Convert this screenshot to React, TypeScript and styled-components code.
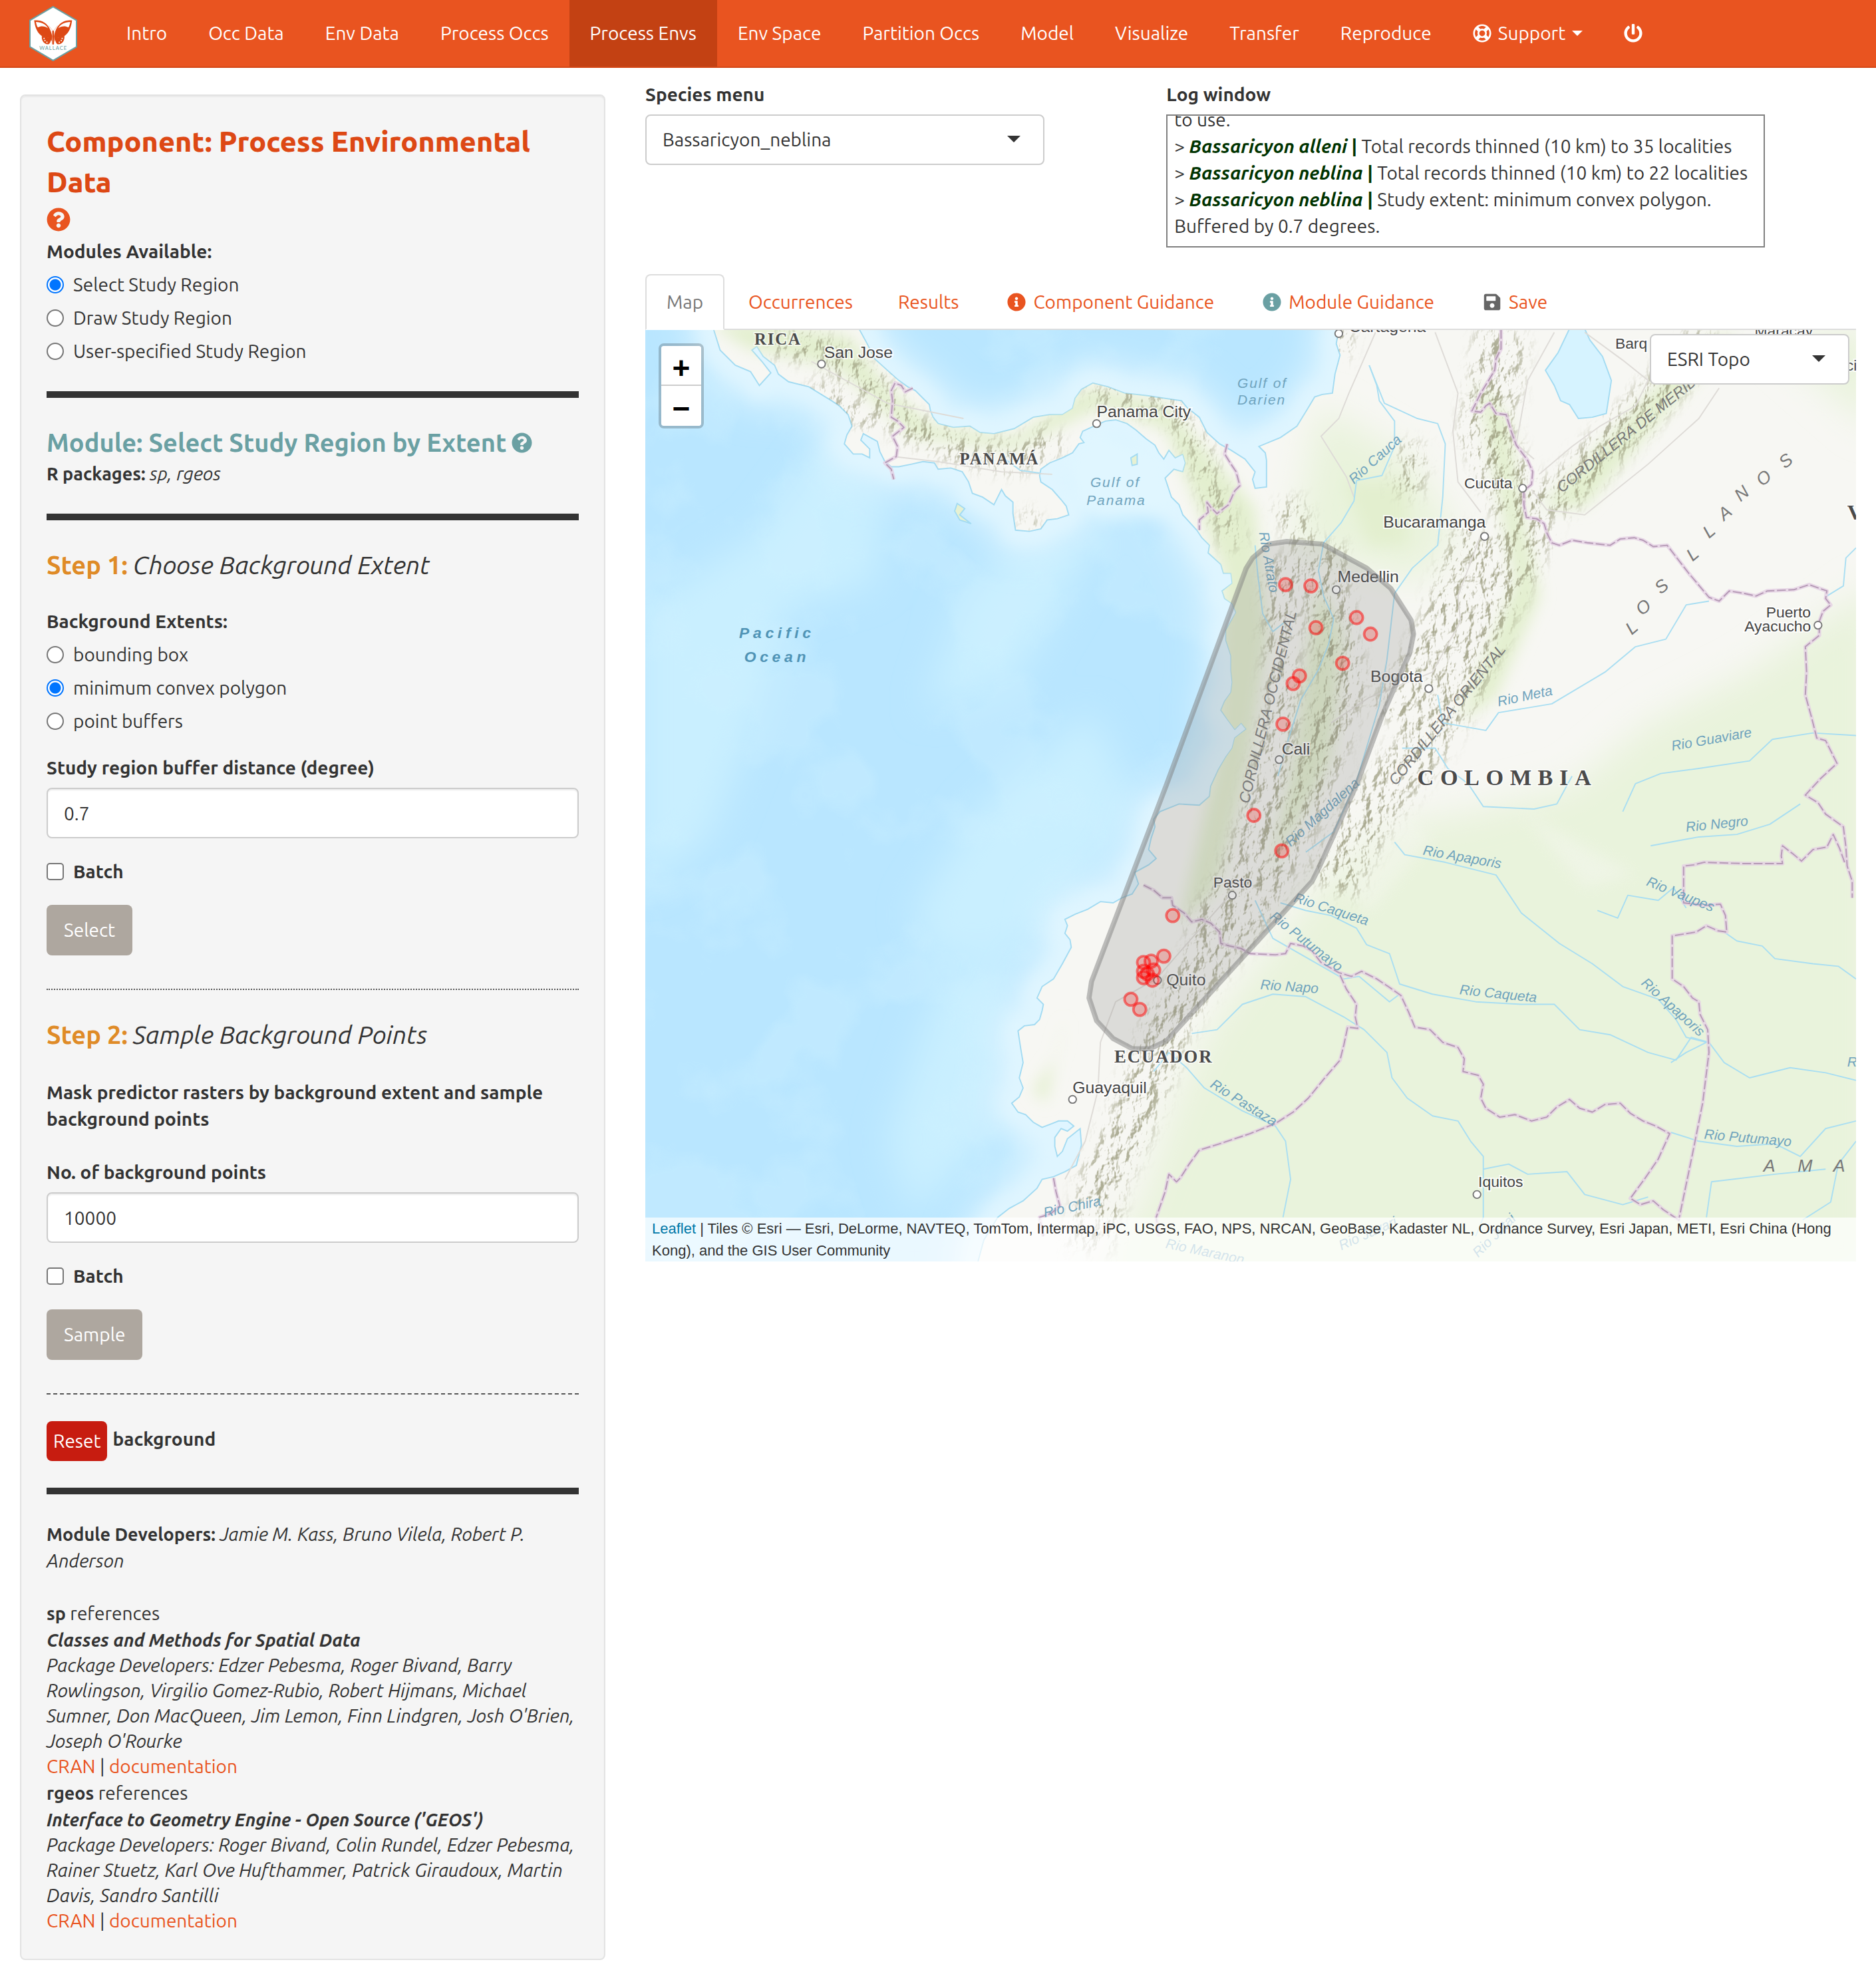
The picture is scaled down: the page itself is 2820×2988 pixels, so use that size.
import React, { useState } from "react";
import styled, { createGlobalStyle, css } from "styled-components";
import {
  FaInfoCircle,
  FaPowerOff,
  FaQuestionCircle,
  FaRegLifeRing,
  FaSave,
} from "react-icons/fa";

const color = {
  brand: "#e95420",
  brandDark: "#c34113",
  heading: "#dd4814",
  teal: "#6aa0a3",
  step: "#df8b27",
  text: "#333333",
  muted: "#aea79f",
  danger: "#c71c10",
  line: "#dddddd",
  field: "#cccccc",
};

const GlobalStyle = createGlobalStyle`
  *, *::before, *::after { box-sizing: border-box; }
  body {
    margin: 0;
    background: #ffffff;
    color: ${color.text};
    font-family: Ubuntu, Roboto, "Noto Sans", sans-serif;
    font-size: 28px;
    line-height: 40px;
  }
  button, input, select { font: inherit; color: inherit; }
  a { color: ${color.brand}; text-decoration: none; }
`;

/* ---------- Navigation ---------- */

const Navbar = styled.nav`
  display: flex;
  align-items: stretch;
  min-height: 102px;
  padding: 0 44px;
  background: ${color.brand};
  border-bottom: 2px solid #d34615;
`;

const Brand = styled.a`
  display: flex;
  align-items: center;
  margin-right: 43px;
`;

const NavList = styled.ul`
  display: flex;
  margin: 0;
  padding: 0;
  list-style: none;
`;

const NavLink = styled.a<{ $active?: boolean }>`
  display: flex;
  align-items: center;
  gap: 10px;
  height: 100%;
  padding: 30px 31px;
  color: #ffffff;
  white-space: nowrap;
  background: ${(p) => (p.$active ? color.brandDark : "transparent")};
`;

const Caret = styled.span<{ $size: number }>`
  width: 0;
  height: 0;
  border: ${(p) => p.$size}px solid transparent;
  border-top-color: currentColor;
  border-bottom: 0;
`;

/* ---------- Page frame ---------- */

const Page = styled.div`
  display: grid;
  grid-template-columns: minmax(0, 1fr) minmax(0, 2fr);
  align-items: start;
`;

const SideColumn = styled.aside`
  padding: 40px 30px;
`;

const MainColumn = styled.main`
  padding: 20px 30px;
`;

const Well = styled.div`
  padding: 38px;
  background: #f5f5f5;
  border: 2px solid #e3e3e3;
  border-radius: 8px;
  box-shadow: inset 0 2px 2px rgba(0, 0, 0, 0.05);
`;

/* ---------- Sidebar ---------- */

const ComponentTitle = styled.h1`
  margin: 0 0 8px;
  color: ${color.heading};
  font-size: 43px;
  line-height: 61px;
  font-weight: 800;
`;

const HelpButton = styled.button<{ $tone: string; $size: number }>`
  display: inline-flex;
  padding: 0;
  border: 0;
  background: none;
  color: ${(p) => p.$tone};
  font-size: ${(p) => p.$size}px;
  cursor: pointer;
`;

const SectionTitle = styled.h2<{ $tone: string }>`
  display: flex;
  align-items: center;
  gap: 8px;
  margin: 0;
  color: ${(p) => p.$tone};
  font-size: 38px;
  line-height: 54px;
  font-weight: 700;

  em { color: ${color.text}; font-weight: 400; }
`;

const ChoiceGroup = styled.fieldset<{ $top: number }>`
  display: flex;
  flex-direction: column;
  gap: 10px;
  min-width: 0;
  margin: ${(p) => p.$top}px 0 0;
  padding: 0;
  border: 0;
`;

const Legend = styled.legend`
  margin-bottom: 10px;
  padding: 0;
  font-weight: 700;
`;

const Choice = styled.label<{ $bold?: boolean }>`
  display: flex;
  align-items: center;
  gap: 14px;
  font-weight: ${(p) => (p.$bold ? 700 : 400)};
`;

const tick = css`
  appearance: none;
  flex: none;
  width: 26px;
  height: 26px;
  margin: 0;
  background: #ffffff;
  border: 2px solid #767676;
`;

const Radio = styled.input.attrs({ type: "radio" })`
  ${tick}
  border-radius: 50%;

  &:checked {
    border-color: #0075ff;
    background: radial-gradient(circle, #0075ff 8px, #ffffff 9px);
  }
`;

const Checkbox = styled.input.attrs({ type: "checkbox" })`
  ${tick}
  border-radius: 5px;

  &:checked { background: #0075ff; }
`;

const Rule = styled.hr<{ $kind?: "solid" | "dotted" | "dashed" }>`
  margin: 40px 0;
  border: 0;
  border-top: ${(p) =>
    p.$kind === "dotted" || p.$kind === "dashed"
      ? `2px ${p.$kind} #555555`
      : `10px solid ${color.text}`};
`;

const Packages = styled.p`
  margin: 0;

  b { font-size: 27px; }
`;

const Form = styled.form`
  display: flex;
  flex-direction: column;
  align-items: stretch;
  gap: 30px;
  margin-bottom: 50px;
`;

const Field = styled.div`
  display: flex;
  flex-direction: column;
  gap: 10px;
`;

const FieldLabel = styled.label`
  font-weight: 700;
`;

const TextInput = styled.input`
  width: 100%;
  height: 76px;
  padding: 0 24px;
  background: #ffffff;
  border: 2px solid ${color.field};
  border-radius: 8px;
  box-shadow: inset 0 2px 2px rgba(0, 0, 0, 0.075);
`;

const Note = styled.p`
  margin: 40px 0;
  font-weight: 700;
`;

const ActionButton = styled.button`
  align-self: flex-start;
  height: 76px;
  padding: 0 26px;
  border: 0;
  border-radius: 8px;
  background: ${color.muted};
  color: #ffffff;
`;

const ResetRow = styled.div`
  display: flex;
  align-items: center;
  gap: 8px;

  b { padding-bottom: 6px; }
`;

const ResetButton = styled.button`
  height: 60px;
  padding: 0 10px;
  border: 0;
  border-radius: 8px;
  background: ${color.danger};
  color: #ffffff;
`;

const Credits = styled.p`
  margin: 0 0 38px;

  b { font-size: 27px; }
`;

const Reference = styled.section`
  line-height: 38px;

  h3 { margin: 0; font-size: 28px; line-height: 42px; font-weight: 400; }
  p { margin: 0; }
  b { font-size: 27px; }
`;

/* ---------- Main panel ---------- */

const TopRow = styled.div`
  display: grid;
  grid-template-columns: 5fr 7fr;
  margin: 0 -30px 40px;

  > div { padding: 0 30px; }
`;

const SelectFrame = styled.div<{ $width: number }>`
  position: relative;
  width: ${(p) => p.$width}px;
  max-width: 100%;

  > span { position: absolute; top: 32px; right: 36px; pointer-events: none; }
`;

const Select = styled.select`
  appearance: none;
  width: 100%;
  height: 76px;
  padding: 0 24px;
  background: #ffffff;
  border: 2px solid ${color.field};
  border-radius: 8px;
`;

const LogTitle = styled.h2`
  margin: 0 0 10px;
  font-size: 28px;
  line-height: 40px;
  font-weight: 700;
`;

const LogWindow = styled.div`
  display: flex;
  flex-direction: column;
  justify-content: flex-end;
  width: 900px;
  max-width: 100%;
  height: 200px;
  padding: 10px;
  overflow: hidden;
  border: 2px solid #808080;

  p { flex: none; margin: 0; }
  b { color: #003300; }
`;

const Tabs = styled.ul`
  display: flex;
  gap: 4px;
  margin: 0;
  padding: 0;
  list-style: none;
  border-bottom: 2px solid ${color.line};
`;

const Tab = styled.a<{ $active?: boolean; $icon?: string }>`
  display: flex;
  align-items: center;
  gap: 11px;
  margin-bottom: -2px;
  padding: 20px 30px;
  border: 2px solid transparent;
  border-radius: 8px 8px 0 0;
  white-space: nowrap;

  svg { margin-left: 5px; color: ${(p) => p.$icon ?? color.brand}; }

  ${(p) =>
    p.$active &&
    css`
      color: #777777;
      background: #ffffff;
      border-color: ${color.line} ${color.line} #ffffff;
    `}
`;

/* ---------- Map ---------- */

const MapPane = styled.section`
  position: relative;
  height: 1400px;
  overflow: hidden;
  background: #c2eaff;
`;

const MapCanvas = styled.svg`
  display: block;
  width: 100%;
  height: 100%;
`;

const ZoomControl = styled.div`
  position: absolute;
  top: 20px;
  left: 20px;
  display: flex;
  flex-direction: column;
  border: 4px solid rgba(0, 0, 0, 0.2);
  border-radius: 8px;
  background-clip: padding-box;
`;

const ZoomButton = styled.button`
  width: 60px;
  height: 60px;
  padding: 8px 0 0;
  border: 0;
  background: #ffffff;
  color: #000000;
  font: bold 46px/50px "Liberation Sans", sans-serif;

  &:first-child { border-bottom: 2px solid ${color.field}; border-radius: 4px 4px 0 0; }
  &:last-child { border-radius: 0 0 4px 4px; }
`;

const Basemap = styled.div`
  position: absolute;
  top: 6px;
  right: 10px;
`;

const Attribution = styled.footer`
  position: absolute;
  right: 0;
  bottom: 0;
  left: 0;
  padding: 0 10px;
  background: rgba(255, 255, 255, 0.7);
  font: 22px/33px "Liberation Sans", Arial, sans-serif;

  a { color: #0078a8; }
`;

const Place = styled.text<{ $size?: number }>`
  font-family: "Liberation Sans", sans-serif;
  font-size: ${(p) => p.$size ?? 13}px;
  fill: #444444;
  stroke: rgba(255, 255, 255, 0.8);
  stroke-width: 2px;
  paint-order: stroke;
`;

const Country = styled.text<{ $size: number; $gap: number }>`
  font-family: "Liberation Serif", serif;
  font-weight: 700;
  font-size: ${(p) => p.$size}px;
  letter-spacing: ${(p) => p.$gap}px;
  fill: #4a4a4a;
  stroke: rgba(255, 255, 255, 0.6);
  stroke-width: 2px;
  paint-order: stroke;
`;

const Water = styled.text<{ $size?: number; $gap?: number; $bold?: boolean }>`
  font-family: "Liberation Sans", sans-serif;
  font-style: italic;
  font-weight: ${(p) => (p.$bold ? 700 : 400)};
  font-size: ${(p) => p.$size ?? 11}px;
  letter-spacing: ${(p) => p.$gap ?? 0}px;
  fill: ${(p) => (p.$bold ? "#4f93b5" : "#6fa3bd")};
`;

const Region = styled.text<{ $size?: number }>`
  font-family: "Liberation Sans", sans-serif;
  font-style: italic;
  font-size: ${(p) => p.$size ?? 12}px;
  fill: #787878;
`;

const PACIFIC =
  "M560 250L563 260 568 276 580 288 592 293 599 304 608 294 601 285 593 276 597 273 602 281 611 288 614 295 622 301 638 305 656 316 662 320 669 327 672 336 668 343 666 350 673 358 680 358 686 361 686 354 679 347 681 342 692 348 694 356 698 364 703 368 709 368 719 366 728 364 737 365 740 370 750 369 759 372 764 380 767 389 775 392 784 398 787 392 790 386 793 391 799 396 799 405 801 418 812 419 821 417 826 410 834 409 843 406 841 399 837 394 830 386 821 380 820 375 821 370 828 365 838 361 846 357 851 350 855 349 852 345 854 340 865 335 872 332 880 331 889 334 896 339 904 346 911 351 914 357 918 362 922 355 927 361 933 358 935 365 933 372 926 370 919 377 924 392 930 398 933 406 944 418 948 424 954 430 953 436 963 445 965 452 971 452 972 460 964 466 966 472 972 476 975 483 971 490 967 497 967 505 971 517 971 529 972 538 971 546 966 553 963 560 968 567 974 575 979 570 983 575 974 582 972 590 967 597 961 607 955 620 954 628 946 635 930 634 915 640 910 646 911 652 908 661 906 670 912 677 906 682 895 688 898 697 893 705 885 708 878 712 868 711 858 717 848 721 840 725 842 730 840 736 844 741 845 747 838 760 831 772 822 778 818 787 823 792 822 797 820 804 816 808 808 809 803 813 805 826 807 838 804 850 807 858 804 865 798 870 803 877 809 879 815 885 822 889 830 886 835 884 842 884 847 888 842 892 837 890 832 897 832 904 834 912 838 908 842 898 852 890 853 903 849 919 840 924 831 928 822 930 818 937 807 947 796 953 787 960 776 978 770 1000";
const CARIBBEAN =
  "L1480 1000 1480 250 1056 250 1056 260 1054 271 1057 280 1053 295 1051 310 1043 311 1037 313 1031 323 1023 336 1010 345 993 352 998 357 999 363 999 375 999 384 990 385 988 378 990 372 982 362 971 355 962 350 952 341 946 329 936 321 932 316 918 314 905 312 887 310 874 305 862 302 853 307 848 314 846 322 838 327 828 327 815 329 800 338 784 342 773 341 765 336 752 337 740 334 736 329 734 324 733 319 728 314 722 308 716 305 709 300 700 292 690 283 684 271 678 260 676 250Z";
const LAND = PACIFIC + CARIBBEAN;

const RIDGES = [
  { d: "M610 270L645 275 690 305 712 335 760 355 800 362 835 345", w: 22 },
  { d: "M640 305L690 335", w: 14 },
  { d: "M808 414L818 408 M860 310L920 320 945 350 960 400 975 430", w: 16 },
  { d: "M1012 440L1010 500 1012 560 1000 610 990 650 970 700 945 740", w: 26 },
  { d: "M1042 430L1050 490 1060 540 1040 600 1015 660 990 710 950 760 925 800 905 850 890 890 870 930 860 985", w: 36 },
  { d: "M1185 262L1180 300 1172 340 1190 380 1205 420 1175 480 1150 540 1120 590 1080 640 1050 700", w: 40 },
  { d: "M1170 420L1140 500 1100 570", w: 44 },
  { d: "M1220 400L1250 370 1290 330 1330 285 1350 265", w: 30 },
  { d: "M1115 350L1110 390 M1015 395L1030 430 M1040 262L1065 275", w: 22 },
];

const BORDERS = [
  "M720 306L714 309 711 304 706 302 703 308 704 316 703 329 708 332 713 337 704 344 708 352 707 360 698 365 703 370 705 378",
  "M968 350L966 358 971 366 975 372 978 383 974 387 969 398 960 405 955 400 952 396 953 404 946 410 946 418",
  "M1184 260L1184 275 1180 283 1179 292 1168 310 1161 324 1168 325 1172 320 1175 318 1180 326 1188 327 1192 340 1196 351 1205 363 1209 372 1208 382 1202 387 1202 398 1204 408 1212 409 1218 413 1220 420 1224 428 1230 430 1240 426 1252 428 1270 430 1278 425 1289 424 1296 426 1304 431 1315 430 1332 452 1348 471 1356 474 1364 466 1376 468 1385 470 1394 466 1415 465 1427 461 1441 466 1440 472 1444 477 1438 482 1435 490 1435 501 1424 510 1425 530 1424 548 1429 566 1433 582 1440 584 1449 602 1436 614 1424 627 1434 633 1440 642 1454 652 1456 668 1457 683 1461 695 1461 708",
  "M1455 680L1451 669 1446 658 1441 668 1430 670 1421 679 1415 674 1406 667 1405 675 1406 681 1375 681 1344 680 1336 682 1328 683 1328 712 1345 714 1357 713 1361 722 1362 735 1355 734 1346 730 1338 735 1319 738 1319 772 1328 778 1335 787 1340 790 1341 800 1347 812 1348 830 1343 870 1335 910 1324 963",
  "M902 698L910 702 917 708 924 708 925 714 934 720 940 727 948 725 955 728 962 735 963 744 970 746 979 748 986 752 1006 753 1014 752 1018 744 1028 746 1035 750 1042 759 1056 767 1066 770 1074 766 1086 772 1095 778 1105 785 1111 798 1116 810 1128 812 1138 822 1150 826 1155 835 1154 845 1166 848 1170 855 1168 866 1172 874 1183 881 1195 879 1208 884 1220 881 1228 873 1238 867 1246 874 1256 877 1266 871 1278 870 1286 878 1296 884 1306 888 1317 894 1308 914 1297 930 1286 945 1294 950 1304 947 1312 954 1324 962",
  "M1057 769L1062 780 1070 792 1069 802 1071 811 1063 810 1060 824 1057 836 1045 850 1032 866 1020 877 1006 886 986 894 962 902 946 907 938 918 931 929 928 932 922 926 919 940 912 960 914 975",
  "M831 929L833 940 836 951 829 957 820 960 823 975",
];

const RIVERS = [
  "M1080 288L1086 304 1088 316 1100 332 1100 352 1090 375 1070 379 1068 395 1058 412 1044 428 1040 450 1044 470 1052 488 1048 508 1040 528 1026 552 1014 590 1008 612",
  "M1080 288L1092 318 1118 330 1134 334 1140 350 1138 392 1134 430 1114 448 1100 468 1094 520 1088 556 1070 616 1052 656 1030 672",
  "M990 430L992 452 996 484 1004 498 1014 490",
  "M1134 548L1138 570 1172 576 1182 562 1224 555 1266 530 1290 510 1314 504 1330 477 1348 474",
  "M1106 590L1132 590 1142 606 1158 618 1170 636 1210 638 1228 634 1240 612",
  "M1280 640L1290 618 1310 610 1340 606 1380 600 1398 583 1430 578 1464 580",
  "M1302 667L1340 660 1370 658 1396 650 1420 634",
  "M1100 664L1108 674 1140 680 1180 690 1200 720 1230 744 1256 760 1280 778 1308 788 1322 804 1330 818 1346 822 1330 830 1318 838",
  "M1260 718L1276 724 1284 706 1308 710 1320 700 1330 716",
  "M1010 712L1030 718 1050 722 1070 732 1078 745 1096 752 1104 776 1130 784 1164 790 1200 792 1226 792 1246 812 1270 816 1300 830 1322 836 1334 818 1348 822 1360 838 1380 850 1412 842 1440 846 1464 852",
  "M990 710L1004 740 1018 748 1060 772 1072 770 1096 790 1104 784",
  "M1360 735L1370 742 1390 746 1400 756 1430 760 1450 762 1464 772",
  "M940 815L960 812 980 792 1004 784 1030 786 1060 802 1076 812 1094 830 1098 850 1110 866 1130 880 1150 884 1160 900 1170 912 1170 960 1164 975",
  "M910 845L922 830 936 842 950 858 980 876 1006 888 1014 900 1018 930 1012 960",
  "M1170 922L1190 918 1205 926 1236 924 1250 942 1280 950 1300 944",
  "M1318 893L1340 900 1370 904 1400 902 1420 912 1440 890 1464 884",
  "M1464 900L1450 918 1444 948 1422 962 M1346 960L1350 932 1400 926 1440 922",
  "M1464 432L1456 440 1454 462 1441 470",
  "M790 360L805 371 820 373",
];

const ROADS = [
  "M640 285L700 318 760 330 M705 360L740 364 790 372 830 374",
  "M1085 262L1064 310 1056 330 1042 344 1062 376 1068 392",
  "M1132 262L1150 310 1146 340 1150 380 1168 404",
  "M1226 262L1205 300 1196 350 1210 362 M1208 386L1220 402 1250 406 1300 366 1340 330 1356 306",
  "M1250 262L1280 284 1300 300 1290 320 1262 336 1240 352 1214 374",
  "M1168 422L1150 470 1152 490 1130 530 1080 550 1050 570",
  "M970 706L940 740 912 772 880 790 868 822 866 860 856 900 840 930",
];

const OCCURRENCES: [number, number][] = [
  [1014, 461], [1034, 462], [1070, 487], [1038, 495], [1081, 500], [1059, 523],
  [1025, 533], [1020, 539], [1012, 571], [989, 643], [1011, 671], [925, 722],
  [918, 754], [908, 758], [902, 759], [902, 766], [910, 765], [905, 768],
  [902, 771], [909, 773], [892, 788], [899, 796],
];

const CITIES: [number, number, string, number, number, number][] = [
  [648, 287, "San Jose", 650, 282, 13],
  [865, 334, "Panama City", 865, 329, 13],
  [1056, 263, "Cartagena", 1064, 262, 13],
  [1201, 385, "Cucuta", 1155, 385, 12],
  [1171, 423, "Bucaramanga", 1091, 416, 13],
  [1054, 465, "Medellin", 1055, 459, 13],
  [1127, 543, "Bogota", 1081, 538, 13],
  [1009, 599, "Cali", 1011, 595, 13],
  [972, 706, "Pasto", 957, 700, 12],
  [913, 773, "Quito", 920, 777, 13],
  [846, 867, "Guayaquil", 846, 862, 13],
  [1165, 942, "Iquitos", 1166, 936, 12],
  [1434, 493, "Ayacucho", 1376, 498, 12],
];

const LLANOS: [string, number, number][] = [
  ["L", 1287, 501], ["O", 1295, 486], ["S", 1310, 469], ["L", 1335, 443], ["L", 1348, 425],
  ["A", 1360, 411], ["N", 1373, 396], ["O", 1390, 384], ["S", 1408, 370],
];

function StudyMap() {
  return (
    <MapCanvas
      viewBox="509 260 955 735"
      preserveAspectRatio="xMidYMid slice"
      role="img"
      aria-label="Study region map"
    >
      <defs>
        <clipPath id="land"><path d={LAND} /></clipPath>
        <filter id="soft6" x="-30%" y="-30%" width="160%" height="160%"><feGaussianBlur stdDeviation="6" /></filter>
        <filter id="soft14" x="-30%" y="-30%" width="160%" height="160%"><feGaussianBlur stdDeviation="14" /></filter>
        <filter id="relief" x="0" y="0" width="1" height="1" colorInterpolationFilters="sRGB">
          <feTurbulence type="fractalNoise" baseFrequency="0.1 0.07" numOctaves={4} seed={7} result="n" />
          <feDiffuseLighting in="n" surfaceScale={5} diffuseConstant={1} lightingColor="#ffffff" result="lit">
            <feDistantLight azimuth={215} elevation={50} />
          </feDiffuseLighting>
          <feColorMatrix in="lit" type="matrix" values="0 0 0 0 0.58  0 0 0 0 0.58  0 0 0 0 0.46  -2 0 0 0 1.35" />
        </filter>
        <filter id="patches" x="0" y="0" width="1" height="1" colorInterpolationFilters="sRGB">
          <feTurbulence type="fractalNoise" baseFrequency="0.012" numOctaves={4} seed={12} />
          <feColorMatrix type="matrix" values="0 0 0 0 0.81  0 0 0 0 0.945  0 0 0 0 1  6 0 0 0 -3" />
        </filter>
        <mask id="ridges">
          <g filter="url(#soft6)" fill="none" stroke="#ffffff" strokeLinejoin="round">
            {RIDGES.map((r) => <path key={r.d} d={r.d} strokeWidth={r.w} />)}
          </g>
        </mask>
      </defs>

      <rect x="509" y="260" width="955" height="735" fill="#b9e6ff" />
      <g filter="url(#soft14)" fill="#c9efff">
        <path d="M505 480L600 420 660 340 700 390 690 460 620 480 600 560 560 660 505 700Z" />
        <path d="M730 560L800 540 870 420 800 430 760 470Z M770 640L860 560 900 640 820 740 740 760 720 720Z" />
        <path d="M740 780L800 740 780 900 720 960 700 900Z" />
      </g>
      <rect x="509" y="260" width="955" height="735" filter="url(#patches)" opacity="0.35" />
      <g fill="none" stroke="#dff5ff" strokeLinejoin="round">
        <path d={LAND} strokeWidth="36" filter="url(#soft14)" />
        <path d={LAND} strokeWidth="20" filter="url(#soft6)" />
      </g>
      <path d="M862 337L840 365 845 400 870 410 930 405 915 355Z" fill="#e0f6ff" filter="url(#soft6)" />

      <path d={LAND} fill="#f7f7f3" stroke="#a3dbf2" strokeWidth="1" />
      <g clipPath="url(#land)">
        <g filter="url(#soft14)" fill="#e9f3dc">
          <path d="M960 800L1040 700 1100 650 1160 640 1240 620 1300 570 1380 530 1480 460 1480 1010 860 1010 900 950 930 860Z" />
          <path d="M1040 320L1110 360 1150 420 1120 460 1020 430Z" />
          <path d="M1400 270L1480 260 1480 340Z" />
        </g>
        <g filter="url(#soft6)" fill="#e3efcf">
          <path d="M560 255L600 255 670 265 700 305 735 335 800 345 860 305 920 318 990 400 1000 500 985 600 960 700 930 730 960 600 965 450 920 340 870 320 800 355 720 345 660 290 590 275Z" />
          <path d="M1165 300L1190 330 1200 400 1215 470 1180 550 1150 570 1195 460 1180 380Z" />
          <path d="M1060 380L1110 380 1110 430 1080 430Z M1215 400L1340 270 1370 262 1250 400Z" />
          <path d="M815 860L835 830 840 800 825 870Z M1040 460L1060 500 1050 600 1000 690 1020 600 1030 520Z" />
        </g>
        <path d="M1200 640L1290 690 1250 700Z M1060 700L1100 640 1130 660 1080 720Z" fill="#f8f8f4" opacity="0.4" filter="url(#soft6)" />
        <g mask="url(#ridges)" opacity="0.75">
          <rect x="509" y="260" width="955" height="735" filter="url(#relief)" />
        </g>
      </g>

      <g stroke="#a3dbf2">
        <path d="M1240 255L1229 278 1219 292 1226 304 1231 316 1238 319 1245 330 1256 329 1267 326 1271 300 1264 281 1254 268 1248 255Z" fill="#d6f3ff" />
        <path d="M755 397L761 401 757 406 766 413 757 410 753 403Z M892 361L897 358 897 366 893 367Z" fill="#e6f1d3" />
      </g>
      <g fill="none" stroke="#dedbd7" strokeWidth="1">
        {ROADS.map((d) => <path key={d} d={d} />)}
      </g>
      <g fill="none" stroke="#a9def2" strokeWidth="1" strokeLinejoin="round">
        {RIVERS.map((d) => <path key={d} d={d} />)}
      </g>
      <g fill="none" strokeLinejoin="round">
        {BORDERS.map((d) => (
          <g key={d}>
            <path d={d} stroke="#e3cfe3" strokeWidth="3" opacity="0.8" />
            <path d={d} stroke="#b59ab5" strokeWidth="1" strokeDasharray="7 2" />
          </g>
        ))}
      </g>

      <Country $size={13} $gap={1} x="595" y="272">RICA</Country>
      <Country $size={13} $gap={1} x="757" y="366">PANAMÁ</Country>
      <Country $size={18} $gap={5} x="1118" y="619">COLOMBIA</Country>
      <Country $size={14} $gap={1} x="879" y="838">ECUADOR</Country>
      <Country $size={17} $gap={1} x="1457" y="410">V</Country>

      <Water $bold $size={12} $gap={3} x="583" y="503">Pacific</Water>
      <Water $bold $size={12} $gap={3} x="587" y="522">Ocean</Water>
      <Water $size={11} $gap={1} x="860" y="384">Gulf of</Water>
      <Water $size={11} $gap={1} x="857" y="398">Panama</Water>
      <Water $size={11} $gap={1} x="976" y="306">Gulf of</Water>
      <Water $size={11} $gap={1} x="976" y="319">Darien</Water>
      <Water transform="translate(1068 382) rotate(-42)">Rio Cauca</Water>
      <Water transform="translate(993 420) rotate(80)">Rio Atrato</Water>
      <Water transform="translate(1182 557) rotate(-12)">Rio Meta</Water>
      <Water transform="translate(1319 592) rotate(-10)">Rio Guaviare</Water>
      <Water transform="translate(1330 656) rotate(-6)">Rio Negro</Water>
      <Water transform="translate(1122 674) rotate(10)">Rio Apaporis</Water>
      <Water transform="translate(1298 698) rotate(22)">Rio Vaupes</Water>
      <Water transform="translate(1020 711) rotate(18)">Rio Caqueta</Water>
      <Water transform="translate(1001 724) rotate(38)">Rio Putumayo</Water>
      <Water transform="translate(1018 668) rotate(-42)">Rio Magdalena</Water>
      <Water transform="translate(994 780) rotate(4)">Rio Napo</Water>
      <Water transform="translate(1151 784) rotate(6)">Rio Caqueta</Water>
      <Water transform="translate(1294 776) rotate(42)">Rio Apaporis</Water>
      <Water transform="translate(954 857) rotate(32)">Rio Pastaza</Water>
      <Water transform="translate(1344 898) rotate(5)">Rio Putumayo</Water>
      <Water transform="translate(824 960) rotate(-12)">Rio Chira</Water>
      <Water transform="translate(919 984) rotate(12)">Rio Maranon</Water>
      <Water transform="translate(1058 986) rotate(-24)">Rio Javari</Water>
      <Water transform="translate(1166 992) rotate(-45)">Rio Jutai</Water>
      <Water x="1457" y="841">R</Water>

      <Region transform="translate(985 634) rotate(-76)">CORDILLERA OCCIDENTAL</Region>
      <Region transform="translate(1101 620) rotate(-51)">CORDILLERA ORIENTAL</Region>
      <Region transform="translate(1232 389) rotate(-39)">CORDILLERA DE MERIDA</Region>
      {LLANOS.map(([letter, x, y]) => (
        <Region key={x} $size={14} transform={`translate(${x} ${y}) rotate(-40)`}>{letter}</Region>
      ))}
      <Region $size={14} x="1391" y="924">A</Region>
      <Region $size={14} x="1418" y="924">M</Region>
      <Region $size={14} x="1446" y="924">A</Region>

      {CITIES.map(([cx, cy, name, x, y, size]) => (
        <g key={name}>
          <circle cx={cx} cy={cy} r="3" fill="#ffffff" stroke="#777777" strokeWidth="1" />
          <Place $size={size} x={x} y={y}>{name}</Place>
        </g>
      ))}
      <Place $size={12} x="1393" y="487">Puerto</Place>
      <Place $size={12} x="1274" y="275">Barq</Place>
      <Place $size={12} x="1384" y="265">Maracay</Place>
      <Place $size={12} x="1456" y="292">ci</Place>

      <path
        d="M988 440L1001 429 1015 427 1043 429 1078 448 1097 464 1113 489 1115 500 1112 515 1090 565 1070 619 1041 683 1035 695 982 753 920 821 907 827 893 827 878 819 865 805 859 787 861 774 920 619 983 448Z"
        fill="#808080"
        fillOpacity="0.22"
        stroke="#808080"
        strokeOpacity="0.5"
        strokeWidth="4"
        strokeLinejoin="round"
      />
      <g fill="#ff0000" fillOpacity="0.2" stroke="#ff0000" strokeOpacity="0.5" strokeWidth="2">
        {OCCURRENCES.map(([x, y], i) => <circle key={i} cx={x} cy={y} r="5" />)}
      </g>
    </MapCanvas>
  );
}

function Wing() {
  return (
    <>
      <path
        fillRule="evenodd"
        d="M46 80C84 78 116 92 128 152L127 160C108 160 92 156 78 149 60 136 50 112 46 80ZM54 87C56 98 59 106 63 112 78 103 96 106 109 116 98 96 80 88 54 87Z"
      />
      <path d="M81 149C96 156 112 159 127 159 127 172 122 184 112 188 101 190 91 184 85 174 81 166 80 158 81 149Z" />
      <g fill="#ffffff">
        <circle cx="91" cy="162" r="3" />
        <circle cx="95" cy="172" r="3" />
        <circle cx="104" cy="179" r="3" />
        <path d="M112 190C118 184 121 176 122 168L126 190Z" />
      </g>
    </>
  );
}

function Logo() {
  return (
    <svg width="72" height="83" viewBox="24 15 217 250" role="img" aria-label="Wallace">
      <path d="M132 18L238 80V200L132 262 27 200V80Z" fill="#ffffff" stroke="#6aa0a3" strokeWidth="6" />
      <g fill="#dd4814">
        <Wing />
        <g transform="translate(264 0) scale(-1 1)"><Wing /></g>
        <rect x="128" y="126" width="8" height="64" rx="4" />
        <path d="M131 128L112 104M133 128L152 104" fill="none" stroke="#e9a58c" strokeWidth="2" />
      </g>
      <text x="133" y="213" textAnchor="middle" fontFamily="Lato, sans-serif" fontSize="23" letterSpacing="3" fill="#6aa0a3">
        WALLACE
      </text>
    </svg>
  );
}

const NAV = [
  "Intro", "Occ Data", "Env Data", "Process Occs", "Process Envs", "Env Space",
  "Partition Occs", "Model", "Visualize", "Transfer", "Reproduce",
];

const MODULES = ["Select Study Region", "Draw Study Region", "User-specified Study Region"];
const EXTENTS = ["bounding box", "minimum convex polygon", "point buffers"];

function Radios(props: { name: string; legend: string; options: string[]; initial: string; top: number }) {
  const [value, setValue] = useState(props.initial);
  return (
    <ChoiceGroup $top={props.top}>
      <Legend>{props.legend}</Legend>
      {props.options.map((option) => (
        <Choice key={option}>
          <Radio name={props.name} checked={value === option} onChange={() => setValue(option)} />
          {option}
        </Choice>
      ))}
    </ChoiceGroup>
  );
}

function PackageReference(props: { name: string; title: string; developers: string }) {
  return (
    <Reference>
      <h3><b>{props.name}</b> references</h3>
      <p><b><i>{props.title}</i></b></p>
      <p><i>Package Developers: {props.developers}</i></p>
      <p><a href="#cran">CRAN</a> | <a href="#documentation">documentation</a></p>
    </Reference>
  );
}

export default function App() {
  return (
    <>
      <GlobalStyle />
      <Navbar>
        <Brand href="#home"><Logo /></Brand>
        <NavList>
          {NAV.map((item) => (
            <li key={item}>
              <NavLink href="#nav" $active={item === "Process Envs"}>{item}</NavLink>
            </li>
          ))}
          <li>
            <NavLink href="#support">
              <FaRegLifeRing size={28} />Support<Caret $size={8} />
            </NavLink>
          </li>
          <li>
            <NavLink href="#quit" aria-label="Quit"><FaPowerOff size={28} /></NavLink>
          </li>
        </NavList>
      </Navbar>

      <Page>
        <SideColumn>
          <Well>
            <ComponentTitle>Component: Process Environmental Data</ComponentTitle>
            <HelpButton type="button" $tone={color.brand} $size={36} aria-label="Component help">
              <FaQuestionCircle />
            </HelpButton>
            <Radios name="module" legend="Modules Available:" options={MODULES} initial={MODULES[0]} top={0} />
            <Rule />
            <SectionTitle $tone={color.teal}>
              Module: Select Study Region by Extent
              <HelpButton type="button" $tone={color.teal} $size={31} aria-label="Module help">
                <FaQuestionCircle />
              </HelpButton>
            </SectionTitle>
            <Packages><b>R packages:</b> <i>sp, rgeos</i></Packages>
            <Rule />

            <SectionTitle $tone={color.step}>Step 1: <em>Choose Background Extent</em></SectionTitle>
            <Form>
              <Radios name="extent" legend="Background Extents:" options={EXTENTS} initial={EXTENTS[1]} top={38} />
              <Field>
                <FieldLabel htmlFor="buffer">Study region buffer distance (degree)</FieldLabel>
                <TextInput id="buffer" defaultValue="0.7" />
              </Field>
              <Choice $bold><Checkbox />Batch</Choice>
              <ActionButton type="button">Select</ActionButton>
            </Form>
            <Rule $kind="dotted" />

            <SectionTitle $tone={color.step}>Step 2: <em>Sample Background Points</em></SectionTitle>
            <Note>Mask predictor rasters by background extent and sample background points</Note>
            <Form>
              <Field>
                <FieldLabel htmlFor="points">No. of background points</FieldLabel>
                <TextInput id="points" defaultValue="10000" />
              </Field>
              <Choice $bold><Checkbox />Batch</Choice>
              <ActionButton type="button">Sample</ActionButton>
            </Form>
            <Rule $kind="dashed" />

            <ResetRow><ResetButton type="button">Reset</ResetButton><b>background</b></ResetRow>
            <Rule />

            <Credits>
              <b>Module Developers:</b> <i>Jamie M. Kass, Bruno Vilela, Robert P. Anderson</i>
            </Credits>
            <PackageReference
              name="sp"
              title="Classes and Methods for Spatial Data"
              developers="Edzer Pebesma, Roger Bivand, Barry Rowlingson, Virgilio Gomez-Rubio, Robert Hijmans, Michael Sumner, Don MacQueen, Jim Lemon, Finn Lindgren, Josh O'Brien, Joseph O'Rourke"
            />
            <PackageReference
              name="rgeos"
              title="Interface to Geometry Engine - Open Source ('GEOS')"
              developers="Roger Bivand, Colin Rundel, Edzer Pebesma, Rainer Stuetz, Karl Ove Hufthammer, Patrick Giraudoux, Martin Davis, Sandro Santilli"
            />
          </Well>
        </SideColumn>

        <MainColumn>
          <TopRow>
            <div>
              <Field>
                <FieldLabel htmlFor="species">Species menu</FieldLabel>
                <SelectFrame $width={600}>
                  <Select id="species"><option>Bassaricyon_neblina</option></Select>
                  <Caret $size={10} />
                </SelectFrame>
              </Field>
            </div>
            <div>
              <LogTitle>Log window</LogTitle>
              <LogWindow>
                <p>to use.</p>
                <p>&gt; <b><i>Bassaricyon alleni</i> |</b> Total records thinned (10 km) to 35 localities</p>
                <p>&gt; <b><i>Bassaricyon neblina</i> |</b> Total records thinned (10 km) to 22 localities</p>
                <p>&gt; <b><i>Bassaricyon neblina</i> |</b> Study extent: minimum convex polygon. Buffered by 0.7 degrees.</p>
              </LogWindow>
            </div>
          </TopRow>

          <Tabs>
            <li><Tab href="#map" $active>Map</Tab></li>
            <li><Tab href="#occurrences">Occurrences</Tab></li>
            <li><Tab href="#results">Results</Tab></li>
            <li><Tab href="#component"><FaInfoCircle size={28} />Component Guidance</Tab></li>
            <li><Tab href="#module" $icon={color.teal}><FaInfoCircle size={28} />Module Guidance</Tab></li>
            <li><Tab href="#save" $icon="#666666"><FaSave size={28} />Save</Tab></li>
          </Tabs>

          <MapPane>
            <StudyMap />
            <ZoomControl>
              <ZoomButton type="button" aria-label="Zoom in">+</ZoomButton>
              <ZoomButton type="button" aria-label="Zoom out">−</ZoomButton>
            </ZoomControl>
            <Basemap>
              <SelectFrame $width={300}>
                <Select aria-label="Basemap"><option>ESRI Topo</option></Select>
                <Caret $size={10} />
              </SelectFrame>
            </Basemap>
            <Attribution>
              <a href="#leaflet">Leaflet</a> | Tiles © Esri — Esri, DeLorme, NAVTEQ, TomTom, Intermap, iPC, USGS,
              FAO, NPS, NRCAN, GeoBase, Kadaster NL, Ordnance Survey, Esri Japan, METI, Esri China (Hong Kong), and
              the GIS User Community
            </Attribution>
          </MapPane>
        </MainColumn>
      </Page>
    </>
  );
}
